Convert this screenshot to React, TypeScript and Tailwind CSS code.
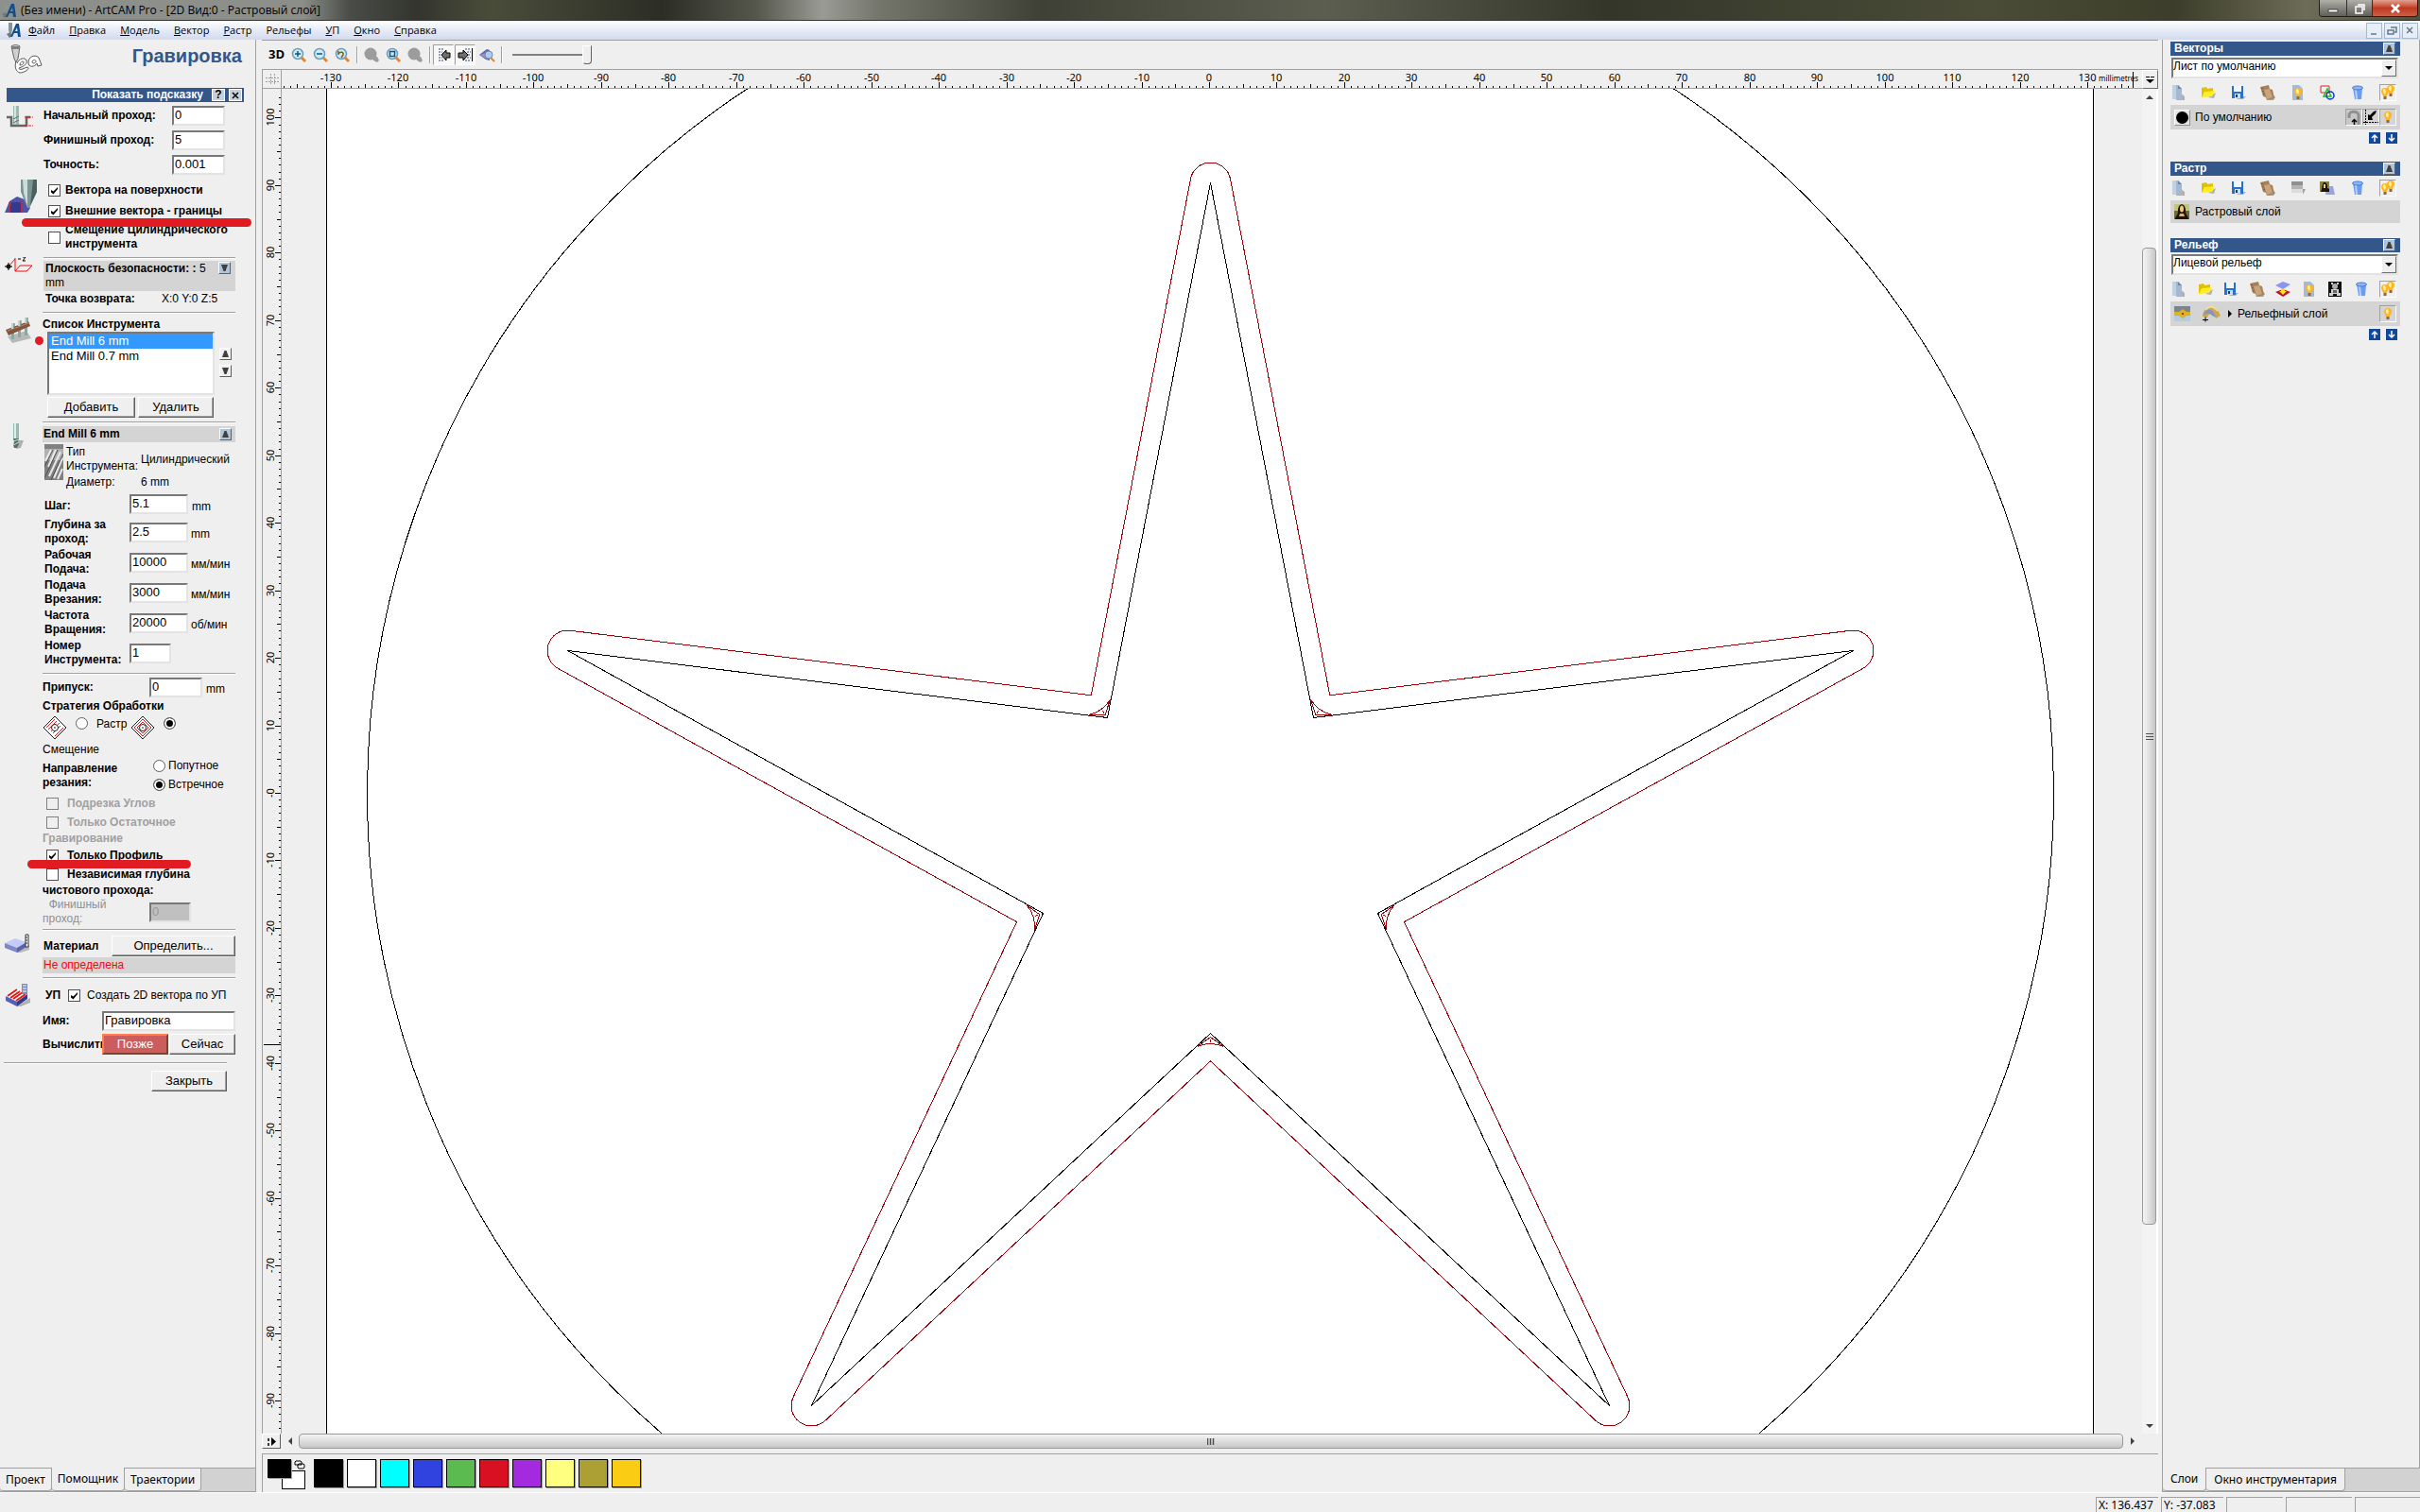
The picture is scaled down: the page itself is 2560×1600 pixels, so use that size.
import { ReactNode, useState } from "react";

const MM = 7.146;
const ORIGIN_X = 981;
const ORIGIN_Y = 745;

type Point = [number, number];

// star outline in canvas pixels, relative to the model origin, clockwise from the top
const STAR: Point[] = [
  [0, -646],
  [109, -80],
  [680, -151],
  [177, 127],
  [422, 648],
  [0, 254],
  [-422, 648],
  [-177, 127],
  [-680, -151],
  [-109, -80],
];

const PALETTE = [
  { name: "Чёрный", color: "bg-black" },
  { name: "Белый", color: "bg-white" },
  { name: "Голубой", color: "bg-[#00ffff]" },
  { name: "Синий", color: "bg-[#3043df]" },
  { name: "Зелёный", color: "bg-[#5cbb50]" },
  { name: "Красный", color: "bg-[#d81022]" },
  { name: "Фиолетовый", color: "bg-[#a42ae0]" },
  { name: "Жёлтый", color: "bg-[#ffff80]" },
  { name: "Оливковый", color: "bg-[#aca034]" },
  { name: "Оранжевый", color: "bg-[#facc14]" },
];

const MENU = [
  "Файл",
  "Правка",
  "Модель",
  "Вектор",
  "Растр",
  "Рельефы",
  "УП",
  "Окно",
  "Справка",
];

function unit(a: Point, b: Point): Point {
  const dx = b[0] - a[0];
  const dy = b[1] - a[1];
  const len = Math.hypot(dx, dy);
  return [dx / len, dy / len];
}

function at(i: number): Point {
  return STAR[(i + STAR.length) % STAR.length];
}

// tool path around the star: arcs at the tips, sharp corners in the notches
function offsetPath(r: number) {
  let d = "";
  STAR.forEach((p, i) => {
    const u1 = unit(at(i - 1), p);
    const u2 = unit(p, at(i + 1));
    const n1: Point = [u1[1], -u1[0]];
    const n2: Point = [u2[1], -u2[0]];
    const cmd = d ? "L" : "M";
    if (i % 2 === 0) {
      d += `${cmd}${p[0] + n1[0] * r} ${p[1] + n1[1] * r}`;
      d += `A${r} ${r} 0 0 1 ${p[0] + n2[0] * r} ${p[1] + n2[1] * r}`;
    } else {
      const k = r / (1 + n1[0] * n2[0] + n1[1] * n2[1]);
      d += `${cmd}${p[0] + (n1[0] + n2[0]) * k} ${p[1] + (n1[1] + n2[1]) * k}`;
    }
  });
  return d + "Z";
}

// leftover material that the tool cannot reach in a notch
function notchPath(i: number) {
  const p = at(i);
  const a = unit(p, at(i - 1));
  const b = unit(p, at(i + 1));
  const len = Math.hypot(a[0] + b[0], a[1] + b[1]);
  const m: Point = [(a[0] + b[0]) / len, (a[1] + b[1]) / len];
  const go = (u: Point, k: number, s: number) =>
    `${p[0] + u[0] * k + m[0] * s} ${p[1] + u[1] * k + m[1] * s}`;
  return `M${go(a, 19, 1)}Q${go(m, 8, 0)} ${go(b, 19, 1)}L${go(m, 4, 0)}ZM${go(m, 6, 0)}L${go(m, 9, 0)}`;
}

function Canvas() {
  return (
    <svg className="block h-full w-full bg-[#efefef]" shapeRendering="crispEdges">
      <g transform={`translate(${ORIGIN_X + 1.5} ${ORIGIN_Y + 0.5})`} fill="none">
        <rect x="-935" y="-2000" width="1869" height="4000" fill="#fff" stroke="#000" />
        <circle r="892" stroke="#000" />
        <path d={"M" + STAR.map((p) => p.join(" ")).join("L") + "Z"} stroke="#000" />
        <path d={offsetPath(3 * MM)} stroke="#a00008" />
        {[1, 3, 5, 7, 9].map((i) => (
          <path key={i} d={notchPath(i)} stroke="#a00008" />
        ))}
      </g>
    </svg>
  );
}

function tickLength(n: number) {
  if (n % 10 === 0) return 6;
  return n % 5 === 0 ? 4 : 2;
}

function HorizontalRuler() {
  const ticks = Array.from({ length: 274 }, (_, i) => i - 137);
  return (
    <svg className="block h-full w-full" shapeRendering="crispEdges">
      {ticks.map((n) => {
        const x = Math.round(ORIGIN_X + n * MM);
        return (
          <g key={n}>
            <path d={`M${x}.5 19v-${tickLength(n)}`} stroke="#000" />
            {n % 10 === 0 && (
              <text x={x} y="12" textAnchor="middle" className="font-['Noto_Sans',sans-serif] text-[11px]">
                {n}
              </text>
            )}
          </g>
        );
      })}
      <text x="1922" y="12" className="font-['Noto_Sans',sans-serif] text-[8px]">
        millimetres
      </text>
      <path d="M1958.5 2v17" stroke="#000" />
    </svg>
  );
}

function VerticalRuler() {
  const ticks = Array.from({ length: 199 }, (_, i) => i - 95);
  return (
    <svg className="block h-full w-full" shapeRendering="crispEdges">
      {ticks.map((n) => {
        const y = Math.round(ORIGIN_Y - n * MM);
        return (
          <g key={n}>
            <path d={`M19 ${y}.5h-${tickLength(n)}`} stroke="#000" />
            {n % 10 === 0 && (
              <text
                transform={`translate(12 ${y}) rotate(-90)`}
                textAnchor="middle"
                className="font-['Noto_Sans',sans-serif] text-[11px]"
              >
                {n === 0 ? "-0" : n}
              </text>
            )}
          </g>
        );
      })}
      <path d="M1 1011.5h18" stroke="#000" />
    </svg>
  );
}

function Rule({ className }: { className: string }) {
  return <div className={`h-[2px] border-t border-[#a0a0a0] border-b border-b-white ${className}`} />;
}

function Check({ id, checked = false, disabled }: { id: string; checked?: boolean; disabled?: boolean }) {
  const [on, setOn] = useState(checked);
  return (
    <span className="grid h-[13px] w-[13px] shrink-0">
      <input
        id={id}
        type="checkbox"
        checked={on}
        disabled={disabled}
        onChange={(e) => setOn(e.target.checked)}
        className="h-[13px] w-[13px] appearance-none border border-[#505050] bg-white [grid-area:1/1] disabled:border-[#808080] disabled:bg-[#efefef]"
      />
      {on && (
        <svg viewBox="0 0 13 13" className="pointer-events-none h-[13px] w-[13px] [grid-area:1/1]">
          <path d="M3 6v2.500l2.500 2L10 5V3L5.500 7.500z" fill="#000" />
        </svg>
      )}
    </span>
  );
}

function Radio({ id, name, defaultChecked }: { id: string; name: string; defaultChecked?: boolean }) {
  return (
    <input
      id={id}
      type="radio"
      name={name}
      defaultChecked={defaultChecked}
      className="h-[13px] w-[13px] shrink-0 appearance-none rounded-full border border-[#606060] bg-white checked:bg-black checked:shadow-[inset_0_0_0_2px_white]"
    />
  );
}

function Field({ id, value, className, disabled }: { id: string; value: string; className: string; disabled?: boolean }) {
  return (
    <input
      id={id}
      type="text"
      defaultValue={value}
      disabled={disabled}
      className={`h-[21px] shrink-0 border-2 border-t-[#787878] border-r-[#e3e3e3] border-b-[#e3e3e3] border-l-[#787878] bg-white px-px pb-[2px] text-[13px] leading-4 disabled:bg-[#c0c0c0] disabled:text-[#989898] ${className}`}
    />
  );
}

function PushButton({ children, className = "" }: { children: ReactNode; className?: string }) {
  return (
    <button
      type="button"
      className={`h-[22px] shrink-0 border border-t-white border-r-[#606060] border-b-[#606060] border-l-white bg-[#efefef] text-[13px] leading-4 shadow-[inset_-1px_-1px_0_#a0a0a0] ${className}`}
    >
      {children}
    </button>
  );
}

function ArrowButton({ down, label, blue }: { down?: boolean; label: string; blue?: boolean }) {
  return (
    <button
      type="button"
      aria-label={label}
      className={`flex h-[13px] w-[13px] shrink-0 items-center justify-center border border-t-white border-r-[#606060] border-b-[#606060] border-l-white ${blue ? "bg-[#b0c4d8]" : "bg-[#efefef]"}`}
    >
      <svg viewBox="0 0 9 9" className="h-[9px] w-[9px]" fill="#404040">
        {down ? <path d="M1 1h7L5.500 8h-2z" /> : <path d="M1 8h7L5.500 1h-2z" />}
      </svg>
    </button>
  );
}

function ParamRow({ id, label, value, units, narrow }: { id: string; label: string[]; value: string; units: string; narrow?: boolean }) {
  return (
    <div className="flex h-[30px] items-center">
      <label htmlFor={id} className="w-[92px] pl-[2px] font-bold">
        {label[0]}
        <br />
        {label[1]}
      </label>
      <Field id={id} value={value} className={narrow ? "w-[44px]" : "w-[62px]"} />
      <span className="pt-[4px] pl-[3px]">{units}</span>
    </div>
  );
}

function StrategyIcon({ offset }: { offset?: boolean }) {
  return (
    <svg viewBox="0 0 26 26" className="h-[26px] w-[26px] shrink-0" fill="none">
      <path d="M13 1l12 12-12 12L1 13z" fill="#fff" stroke="#222" />
      {offset ? (
        <path d="M13 4l9 9-9 9-9-9zM13 7l6 6-6 6-6-6z" stroke="#e02020" />
      ) : (
        <path d="M4 13l9-9M6 15l9-9M9 17l9-9M11 19l8-8M13 22l9-9" stroke="#e02020" strokeWidth="1" />
      )}
      <circle cx="13" cy="13" r="3.500" fill="#fff" stroke="#222" />
      <path d="M12 13h2" stroke="#222" />
    </svg>
  );
}

function AppIcon() {
  return (
    <svg viewBox="0 0 16 16" className="h-4 w-4 shrink-0">
      <path d="M2 0h4v8l-1 3H3L2 8z" fill="#8a9494" />
      <path d="M0 12l4-2 2 4-3 2z" fill="#707878" />
      <path d="M4 15L10 1h3l2 14h-3l-.5-4H8l-2 4zM9 9h2.500L11 5z" fill="#104f8c" />
    </svg>
  );
}

function EngraveIcon() {
  return (
    <svg viewBox="0 0 34 32" className="h-8 w-[34px]" fill="none">
      <path d="M1 2c3-2 6-2 9 0l-2 13-2 4-2-4z" fill="#d0d0d0" stroke="#666" />
      <path d="M2 2h7v3H2z" fill="#808080" />
      <path
        d="M6 18c-2 6 0 11 4 12 4 0 9-3 9-5 0-1-2-1-6 1-3 1-4 0-4-1 6-2 9-5 8-8-2-4-8-2-10 3"
        fill="#fff"
        stroke="#555"
      />
      <path d="M30 14c-4-4-11-1-11 5 0 6 7 5 9 1l1 3 4-1-3-8z" fill="#fff" stroke="#555" />
      <path d="M23 18c1-2 4-2 4 0s-4 3-4 0zM10 21c1-3 4-4 4-2s-2 3-4 3z" stroke="#555" />
    </svg>
  );
}

function DepthIcon() {
  return (
    <svg viewBox="0 0 30 24" className="h-6 w-[30px]" fill="none">
      <path d="M1 12h5v9h16v-9h4" stroke="#666" strokeWidth="2.500" />
      <path d="M8 0h6v20H8z" fill="#9fb8b2" />
      <path d="M9 0h2v19H9z" fill="#d4e6e0" />
      <path d="M8 14l6-3M8 18l6-3" stroke="#56706c" />
      <path d="M20 12h9M20 21h9" stroke="#e02020" strokeDasharray="3 1" />
    </svg>
  );
}

function SurfaceIcon() {
  return (
    <svg viewBox="0 0 36 36" className="h-9 w-9">
      <path d="M0 35l5-12 8-5 8 3 6 9-3 5z" fill="#4c54a8" />
      <path d="M7 24h10v11H5z" fill="#323a90" />
      <path d="M5 24v11M18 24v11" stroke="#e02020" strokeWidth="1.500" />
      <path d="M17 0h17v13l-8 17h-2L17 13z" fill="#7c9494" />
      <path d="M19 0h5v28l-4-14z" fill="#ccdcd8" />
      <path d="M30 0h4v13l-7 15z" fill="#4c6060" />
    </svg>
  );
}

function SafePlaneIcon() {
  return (
    <svg viewBox="0 0 32 18" className="h-[18px] w-8" fill="none">
      <path d="M11 1v14h12l6-6H16l-5 6M4 10l7-8" stroke="#f01010" />
      <circle cx="4" cy="10" r="2" fill="#555" stroke="#000" />
      <path d="M4 6v8M0 10h8M14 2h3M19 0h3l-3 4h3" stroke="#000" />
    </svg>
  );
}

function ToolRackIcon() {
  return (
    <svg viewBox="0 0 28 28" className="h-7 w-7">
      <path d="M2 20l20-6 5 8-20 5z" fill="#b8b8b8" />
      <path d="M6 10h3v13H6zM13 8h3v13h-3zM20 5h3v14h-3z" fill="#8aa8a2" />
      <path d="M0 13L24 4l2 5L3 19z" fill="#84543c" />
      <path d="M2 14L24 6" stroke="#b88c70" />
      <path d="M6 6h3v6H6zM13 3h3v6h-3zM20 0h3v6h-3z" fill="#c0d4ce" />
      <path d="M9 6v6M16 3v6M23 0v6" stroke="#56706c" />
    </svg>
  );
}

function EndMillIcon() {
  return (
    <svg viewBox="0 0 14 30" className="h-[30px] w-[14px]">
      <path d="M7 20h6l-3 8-5 1z" fill="#b0b0b0" />
      <path d="M2 2h6v17H2z" fill="#94bcb4" />
      <path d="M3 1h2v18H3z" fill="#dceee8" />
      <path d="M2 18h6l-1 3 1 3-2 4H3l-1-3 1-3z" fill="#56706c" />
      <path d="M2 21l6-2M2 25l6-3" stroke="#c8dcd8" />
    </svg>
  );
}

function FluteIcon() {
  return (
    <svg viewBox="0 0 20 38" className="h-[38px] w-5 shrink-0">
      <path d="M0 0h20v38H0z" fill="#808080" />
      <path d="M0 5h20v12H0z" fill="#b0b0b0" />
      <path d="M1 18L7 6M4 24L12 6M5 34L17 8M10 36L19 15M14 37l5-11" stroke="#e8e8e8" strokeWidth="2" />
      <path d="M0 36L14 6M7 38L20 10M0 24L9 6" stroke="#505050" />
    </svg>
  );
}

function MaterialIcon() {
  return (
    <svg viewBox="0 0 28 22" className="h-[22px] w-7">
      <path d="M12 20l14-8v5l-9 3z" fill="#b8b8b8" />
      <path d="M0 10l11-5 12 4-10 6z" fill="#c2ccf6" />
      <path d="M0 10l13 5v5L0 15z" fill="#7c88c8" />
      <path d="M13 15l10-6v5l-10 6z" fill="#5a64a8" />
      <path d="M22 1h3v13h-3z" fill="#fff" stroke="#333" />
      <path d="M22 4h2M22 7h2M22 10h2" stroke="#333" />
    </svg>
  );
}

function ToolpathIcon() {
  return (
    <svg viewBox="0 0 28 26" className="h-[26px] w-7">
      <path d="M12 25l14-9v5l-10 4z" fill="#b0b0b0" />
      <path d="M0 14L11 6l12 6-11 8z" fill="#fff" />
      <path d="M2 14l10-7M5 16l10-7M8 17l10-7M11 19l10-7" stroke="#e01818" strokeWidth="2" />
      <path d="M0 14l12 6v5L0 19z" fill="#5660b8" />
      <path d="M12 20l11-8v5l-11 8z" fill="#343c88" />
      <path d="M17 1h6v11h-6z" fill="#7c8cb4" />
      <path d="M18 3h4M18 6h4M18 9h4" stroke="#fff" />
    </svg>
  );
}

function LeftPanel() {
  return (
    <aside className="flex w-[271px] shrink-0 flex-col border-r border-[#a0a0a0]">
      <div className="min-h-0 flex-1 overflow-hidden pt-px text-[12px] leading-[15px]">
        <div className="flex h-[50px] justify-between pt-[4px] pr-[14px] pl-[11px]">
          <EngraveIcon />
          <h1 className="text-[20px] leading-6 font-bold text-[#33578b]">Гравировка</h1>
        </div>
        <div className="mr-3 ml-[7px] flex h-[15px] items-center justify-end gap-[4px] bg-[#33578b] pr-[2px]">
          <span className="pr-[5px] font-bold text-white">Показать подсказку</span>
          <button type="button" className="h-[13px] w-[14px] border border-white bg-[#c4d2e0] text-[12px] leading-[11px] font-bold">
            ?
          </button>
          <button type="button" aria-label="Закрыть" className="flex h-[13px] w-[14px] items-center justify-center border border-white bg-[#c4d2e0]">
            <svg viewBox="0 0 8 8" className="h-2 w-2">
              <path d="M1 1l6 6M7 1L1 7" stroke="#000" strokeWidth="1.500" />
            </svg>
          </button>
        </div>

        <div className="flex pt-[4px]">
          <div className="w-[46px] shrink-0 pl-[6px]">
            <DepthIcon />
          </div>
          <div className="flex w-[192px] flex-col gap-[5px] font-bold">
            <div className="flex items-center justify-between">
              <label htmlFor="start">Начальный проход:</label>
              <Field id="start" value="0" className="w-[56px] font-normal" />
            </div>
            <div className="flex items-center justify-between">
              <label htmlFor="finish">Финишный проход:</label>
              <Field id="finish" value="5" className="w-[56px] font-normal" />
            </div>
            <div className="flex items-center justify-between">
              <label htmlFor="tolerance">Точность:</label>
              <Field id="tolerance" value="0.001" className="w-[56px] font-normal" />
            </div>
          </div>
        </div>

        <div className="relative flex pt-[5px]">
          <div className="w-[51px] shrink-0 pl-[5px]">
            <SurfaceIcon />
          </div>
          <div className="pt-[4px] font-bold">
            <div className="flex items-center gap-[5px]">
              <Check id="on-surface" checked />
              <label htmlFor="on-surface">Вектора на поверхности</label>
            </div>
            <div className="mt-[7px] flex items-center gap-[5px]">
              <Check id="outer-bounds" checked />
              <label htmlFor="outer-bounds">Внешние вектора - границы</label>
            </div>
            <div className="mt-[5px] flex items-center gap-[5px]">
              <Check id="flat-offset" />
              <label htmlFor="flat-offset">
                Смещение Цилиндрического
                <br />
                инструмента
              </label>
            </div>
          </div>
          <div className="absolute top-[46px] left-[23px] h-[9px] w-[243px] rounded-full bg-[#e01b22]" />
        </div>

        <div className="mt-[6px] flex">
          <div className="w-[46px] shrink-0 pl-[5px]">
            <SafePlaneIcon />
          </div>
          <div className="w-[203px]">
            <Rule className="" />
            <div className="mt-[2px] flex h-8 justify-between bg-[#d4d4d4] px-[2px] pt-px pr-[5px]">
              <span>
                <b>Плоскость безопасности: :</b> 5
                <br />
                mm
              </span>
              <ArrowButton down blue label="Развернуть плоскость безопасности" />
            </div>
            <div className="mt-px flex pl-[2px]">
              <b className="w-[123px]">Точка возврата:</b>
              <span>X:0 Y:0 Z:5</span>
            </div>
          </div>
        </div>

        <div className="mt-[6px] flex">
          <div className="w-[45px] shrink-0 pt-[6px] pl-[6px]">
            <ToolRackIcon />
          </div>
          <div className="w-[204px]">
            <Rule className="" />
            <b className="mt-[4px] block">Список Инструмента</b>
            <div className="relative flex gap-[5px] pl-[5px]">
              <ul
                role="listbox"
                aria-label="Список Инструмента"
                className="h-[67px] w-[177px] border-2 border-t-[#787878] border-r-[#e3e3e3] border-b-[#e3e3e3] border-l-[#787878] bg-white text-[13px] leading-4"
              >
                <li role="option" aria-selected="true" className="bg-[#3399ff] pl-[2px] text-white">
                  End Mill 6 mm
                </li>
                <li role="option" aria-selected="false" className="pl-[2px]">
                  End Mill 0.7 mm
                </li>
              </ul>
              <div className="flex flex-col gap-[5px] pt-[17px]">
                <ArrowButton label="Вверх" />
                <ArrowButton down label="Вниз" />
              </div>
              <span className="absolute top-[5px] -left-2 h-[9px] w-[9px] rounded-full bg-[#e01b22]" />
            </div>
            <div className="mt-[2px] flex gap-[3px] pl-[5px]">
              <PushButton className="w-[93px]">Добавить</PushButton>
              <PushButton className="w-[80px]">Удалить</PushButton>
            </div>
          </div>
        </div>

        <div className="mt-[4px] flex">
          <div className="w-[45px] shrink-0 pl-3">
            <EndMillIcon />
          </div>
          <div className="w-[204px]">
            <Rule className="" />
            <div className="mt-[3px] flex h-[17px] items-center justify-between bg-[#d4d4d4] pr-[4px] pl-px">
              <b>End Mill 6 mm</b>
              <ArrowButton blue label="Свернуть параметры инструмента" />
            </div>
            <div className="mt-[2px] flex h-[49px] pl-[2px]">
              <FluteIcon />
              <div className="grid grid-cols-[79px_auto] content-start items-center gap-y-[2px] pt-px pl-[3px]">
                <span>
                  Тип
                  <br />
                  Инструмента:
                </span>
                <span>Цилиндрический</span>
                <span>Диаметр:</span>
                <span>6 mm</span>
              </div>
            </div>
            <div className="mt-[4px] flex h-[21px] items-center">
              <label htmlFor="step" className="w-[92px] pt-[3px] pl-[2px] font-bold">
                Шаг:
              </label>
              <Field id="step" value="5.1" className="w-[62px]" />
              <span className="pt-[5px] pl-[4px]">mm</span>
            </div>
            <div className="mt-[4px] flex flex-col gap-[2px]">
              <ParamRow id="depth" label={["Глубина за", "проход:"]} value="2.5" units="mm" />
              <ParamRow id="feed" label={["Рабочая", "Подача:"]} value="10000" units="мм/мин" />
              <ParamRow id="plunge" label={["Подача", "Врезания:"]} value="3000" units="мм/мин" />
              <ParamRow id="spindle" label={["Частота", "Вращения:"]} value="20000" units="об/мин" />
              <ParamRow id="number" label={["Номер", "Инструмента:"]} value="1" units="" narrow />
            </div>
            <Rule className="mt-[6px]" />
            <div className="mt-[3px] flex h-[21px] items-center">
              <label htmlFor="allowance" className="w-[113px] font-bold">
                Припуск:
              </label>
              <Field id="allowance" value="0" className="w-[56px]" />
              <span className="pt-[4px] pl-[4px]">mm</span>
            </div>
            <b className="mt-[2px] block">Стратегия Обработки</b>
            <div className="mt-[2px] flex h-[26px] items-start">
              <StrategyIcon />
              <span className="flex pt-[2px] pl-[9px]">
                <Radio id="raster" name="strategy" />
              </span>
              <label htmlFor="raster" className="w-[45px] pt-[2px] pl-[9px]">
                Растр
              </label>
              <StrategyIcon offset />
              <span className="flex pt-[2px] pl-[9px]">
                <Radio id="offset" name="strategy" defaultChecked />
              </span>
            </div>
            <label htmlFor="offset" className="mt-[3px] block">
              Смещение
            </label>
            <div className="mt-[3px] flex h-[33px] items-center">
              <b className="w-[117px]">
                Направление
                <br />
                резания:
              </b>
              <div className="flex flex-col gap-[5px]">
                <div className="flex items-center gap-[3px]">
                  <Radio id="climb" name="direction" />
                  <label htmlFor="climb">Попутное</label>
                </div>
                <div className="flex items-center gap-[3px]">
                  <Radio id="conventional" name="direction" defaultChecked />
                  <label htmlFor="conventional">Встречное</label>
                </div>
              </div>
            </div>
            <div className="mt-[6px] flex items-center gap-[9px] pl-[4px] font-bold text-[#a0a0a0]">
              <Check id="corners" disabled />
              <label htmlFor="corners">Подрезка Углов</label>
            </div>
            <div className="mt-[5px] flex flex-wrap items-center gap-x-[9px] gap-y-[2px] font-bold text-[#a0a0a0]">
              <span className="pl-[4px]">
                <Check id="rest" disabled />
              </span>
              <label htmlFor="rest">Только Остаточное</label>
              <span className="w-full">Гравирование</span>
            </div>
            <div className="relative mt-[3px] flex items-center gap-[9px] pl-[4px] font-bold">
              <Check id="profile" checked />
              <label htmlFor="profile">Только Профиль</label>
              <div className="absolute top-3 -left-4 h-[9px] w-[173px] rounded-full bg-[#e01b22]" />
            </div>
            <div className="mt-[5px] flex flex-wrap items-center gap-x-[9px] gap-y-[2px] font-bold">
              <span className="pl-[4px]">
                <Check id="final" />
              </span>
              <label htmlFor="final">Независимая глубина</label>
              <span className="w-full">чистового прохода:</span>
            </div>
            <div className="flex h-[30px] items-center">
              <label htmlFor="final-pass" className="w-[113px] text-[#909090]">
                &nbsp; Финишный
                <br />
                проход:
              </label>
              <Field id="final-pass" value="0" disabled className="w-[44px]" />
            </div>
          </div>
        </div>

        <div className="mt-[3px] flex">
          <div className="w-[45px] shrink-0 pt-[5px] pl-[5px]">
            <MaterialIcon />
          </div>
          <div className="w-[204px]">
            <Rule className="" />
            <div className="mt-[5px] flex items-center justify-between pl-px">
              <b>Материал</b>
              <PushButton className="w-[131px]">Определить...</PushButton>
            </div>
            <div className="mt-px h-[17px] bg-[#d4d4d4] pl-px leading-[17px] text-[#ff0010]">Не определена</div>
          </div>
        </div>

        <div className="mt-[4px] flex">
          <div className="w-[45px] shrink-0 pt-[6px] pl-[6px]">
            <ToolpathIcon />
          </div>
          <div className="w-[204px]">
            <Rule className="" />
            <div className="mt-[10px] flex items-center pl-[3px]">
              <b className="w-6">УП</b>
              <Check id="make-2d" checked />
              <label htmlFor="make-2d" className="pl-[7px] whitespace-nowrap">
                Создать 2D вектора по УП
              </label>
            </div>
            <div className="mt-[9px] flex items-center justify-between">
              <label htmlFor="path-name" className="font-bold">
                Имя:
              </label>
              <Field id="path-name" value="Гравировка" className="w-[141px]" />
            </div>
            <div className="mt-[3px] flex items-center">
              <b className="w-[63px]">Вычислить</b>
              <button
                type="button"
                className="relative h-[22px] w-[70px] border-2 border-t-[#ff7f50] border-r-[#80402c] border-b-[#80402c] border-l-[#ff7f50] bg-[#cd5c5c] text-[13px] leading-4 text-white"
              >
                Позже
              </button>
              <PushButton className="ml-px w-[70px]">Сейчас</PushButton>
            </div>
          </div>
        </div>

        <div className="mt-[8px] ml-[4px] flex w-[236px] flex-col items-end">
          <Rule className="w-full" />
          <PushButton className="mt-[7px] w-[80px]">Закрыть</PushButton>
        </div>
      </div>
      <Tabs labels={["Проект", "Помощник", "Траектории"]} active={1} tabClass="px-[6px]" />
    </aside>
  );
}

function Tabs({ labels, active, tabClass }: { labels: string[]; active: number; tabClass: string }) {
  return (
    <div role="tablist" className="flex h-[26px] shrink-0 border-b border-[#a0a0a0] bg-[#d2d2d2] font-['Noto_Sans',sans-serif] text-[12px]">
      {labels.map((label, i) => (
        <button
          key={label}
          type="button"
          role="tab"
          aria-selected={i === active}
          className={`rounded-b border-r border-b border-[#a0a0a0] bg-[#efefef] whitespace-nowrap ${tabClass} ${i === active ? "" : "border-t"}`}
        >
          {label}
        </button>
      ))}
      <div className="flex-1 border-t border-[#a0a0a0]" />
    </div>
  );
}

function Magnifier({ children }: { children?: ReactNode }) {
  return (
    <svg viewBox="0 0 17 17" className="h-[17px] w-[17px]" fill="none">
      <path d="M11 11l4 4" stroke="#e8822a" strokeWidth="3" />
      <circle cx="7" cy="7" r="5.500" fill="#c8ecf8" stroke="#6c9cbc" strokeWidth="1.500" />
      {children}
    </svg>
  );
}

function GreyMagnifier() {
  return (
    <svg viewBox="0 0 17 17" className="h-[17px] w-[17px]" fill="#9c9c9c">
      <circle cx="7" cy="7" r="6.500" />
      <path d="M8 8l6 2 2 4-2 2-4-2z" />
    </svg>
  );
}

function Divider() {
  return <span className="h-[18px] w-[2px] border-l border-[#a0a0a0] bg-white" />;
}

function Toolbar() {
  return (
    <div className="flex h-[31px] shrink-0 items-center gap-[6px] border-t border-[#a0a0a0] pl-[7px]">
      <button type="button" className="mr-px font-['Open_Sans',sans-serif] text-[13px] font-bold">
        3D
      </button>
      <button type="button" aria-label="Увеличить">
        <Magnifier>
          <path d="M7 4v6M4 7h6" stroke="#205070" strokeWidth="1.500" />
        </Magnifier>
      </button>
      <button type="button" aria-label="Уменьшить">
        <Magnifier>
          <path d="M4 7h6" stroke="#205070" strokeWidth="1.500" />
        </Magnifier>
      </button>
      <button type="button" aria-label="Предыдущий масштаб">
        <Magnifier>
          <path d="M4 8V4M4 7c2-3 6-2 5 1L7 11" stroke="#806010" strokeWidth="1.500" />
        </Magnifier>
      </button>
      <Divider />
      <button type="button" aria-label="Масштаб выделения" disabled>
        <GreyMagnifier />
      </button>
      <button type="button" aria-label="Показать всё">
        <Magnifier>
          <path d="M4.500 4.500h5v5h-5z" stroke="#205070" strokeWidth="1.500" />
        </Magnifier>
      </button>
      <button type="button" aria-label="Масштаб объекта" disabled>
        <GreyMagnifier />
      </button>
      <Divider />
      <div className="-mr-[2px] -ml-[4px] flex gap-px">
        <button type="button" aria-label="Привязка слева" className="border border-t-[#a0a0a0] border-r-white border-b-white border-l-[#a0a0a0] bg-[#f8f8f8] px-px py-[2px]">
          <svg viewBox="0 0 18 16" className="h-4 w-[18px]">
            <path d="M4 2h6M4 5h4M4 8h3M4 11h4M4 14h6" stroke="#304878" strokeDasharray="2 1" />
            <path d="M7 8l5-5v3h4v5h-4v3z" fill="#707070" stroke="#000" />
          </svg>
        </button>
        <button type="button" aria-label="Привязка справа" className="border border-t-[#a0a0a0] border-r-white border-b-white border-l-[#a0a0a0] bg-[#f8f8f8] px-px py-[2px]">
          <svg viewBox="0 0 18 16" className="h-4 w-[18px]">
            <path d="M9 2h6M11 5h4M12 8h3M11 11h4M9 14h6" stroke="#304878" strokeDasharray="2 1" />
            <path d="M16.500 1v14" stroke="#000" />
            <path d="M12 8L7 3v3H2v5h5v3z" fill="#707070" stroke="#000" />
          </svg>
        </button>
      </div>
      <button type="button" aria-label="Просмотр рельефа">
        <svg viewBox="0 0 17 17" className="h-[17px] w-[17px]">
          <path d="M0 8l8-6 3 1v11l-4-1z" fill="#5c66a0" />
          <path d="M0 8l7-2 2 7z" fill="#8c96c8" />
          <path d="M12 11l4 4" stroke="#e8822a" strokeWidth="2" />
          <circle cx="10" cy="8" r="4" fill="#b0cce8" stroke="#7088b8" />
        </svg>
      </button>
      <Divider />
      <div className="ml-[4px] flex items-center">
        <input
          type="range"
          aria-label="Прозрачность"
          defaultValue={100}
          className="h-5 w-[84px] appearance-none bg-[linear-gradient(#808080,#808080)] bg-[length:74px_2px] bg-left bg-no-repeat [&::-webkit-slider-thumb]:h-5 [&::-webkit-slider-thumb]:w-[10px] [&::-webkit-slider-thumb]:appearance-none [&::-webkit-slider-thumb]:rounded-b-sm [&::-webkit-slider-thumb]:border [&::-webkit-slider-thumb]:border-t-white [&::-webkit-slider-thumb]:border-r-[#606060] [&::-webkit-slider-thumb]:border-b-[#606060] [&::-webkit-slider-thumb]:border-l-white [&::-webkit-slider-thumb]:bg-[#efefef]"
        />
      </div>
    </div>
  );
}

function ScrollArrow({ d, label, className }: { d: string; label: string; className: string }) {
  return (
    <button type="button" aria-label={label} className={`flex shrink-0 items-center justify-center ${className}`}>
      <svg viewBox="0 0 8 8" className="h-2 w-2" fill="#404040">
        <path d={d} />
      </svg>
    </button>
  );
}

function Workspace() {
  return (
    <main className="ml-[6px] flex min-w-0 flex-1 flex-col">
      <Toolbar />
      <div className="flex h-[21px] shrink-0 border-t border-l border-[#a0a0a0]">
        <div className="flex w-5 shrink-0 items-center justify-center border-r border-b border-[#a0a0a0]">
          <svg viewBox="0 0 14 14" className="h-[14px] w-[14px]">
            <path d="M5.500 1v12M9.500 1v12M0 5.500h14M0 9.500h14" stroke="#a0a0a0" strokeDasharray="2 1" />
          </svg>
        </div>
        <div className="min-w-0 flex-1 border-b border-[#a0a0a0]">
          <HorizontalRuler />
        </div>
        <button
          type="button"
          aria-label="Единицы измерения"
          className="flex w-[17px] shrink-0 items-center justify-center border border-t-white border-r-[#707070] border-b-[#707070] border-l-white"
        >
          <svg viewBox="0 0 9 9" className="h-[9px] w-[9px]">
            <path d="M0 1.500h4M5 1.500h4" stroke="#000" />
            <path d="M0 4h9L4.500 8z" />
          </svg>
        </button>
      </div>
      <div className="flex min-h-0 flex-1">
        <div className="w-[21px] shrink-0 border-r border-l border-[#a0a0a0]">
          <VerticalRuler />
        </div>
        <div className="min-w-0 flex-1">
          <Canvas />
        </div>
        <div className="flex w-[15px] shrink-0 flex-col bg-[#f3f3f3]">
          <ScrollArrow d="M0 6h8L4 2z" label="Прокрутить вверх" className="h-[18px]" />
          <div className="flex-[150_1_0]" />
          <div className="flex flex-[1034_1_0] items-center justify-center rounded-sm border border-[#9a9a9a] bg-linear-to-r from-[#f4f4f4] via-[#e0e0e0] to-[#c4c6ca]">
            <svg viewBox="0 0 8 7" className="h-[7px] w-2">
              <path d="M0 .5h8M0 3.500h8M0 6.500h8" stroke="#505050" />
            </svg>
          </div>
          <div className="flex-[204_1_0]" />
          <ScrollArrow d="M0 2h8L4 6z" label="Прокрутить вниз" className="h-[17px]" />
        </div>
        <div className="w-[2px] shrink-0 bg-white" />
      </div>
      <div className="flex h-4 shrink-0">
        <button
          type="button"
          aria-label="Привязка"
          className="flex w-5 shrink-0 items-center justify-center border border-t-white border-r-[#606060] border-b-[#606060] border-l-white"
        >
          <svg viewBox="0 0 9 9" className="h-[9px] w-[9px]">
            <path d="M1 1v3M1 6v3" stroke="#000" strokeWidth="1.500" />
            <path d="M4 0l5 4.500L4 9z" />
          </svg>
        </button>
        <ScrollArrow d="M6 0v8L2 4z" label="Прокрутить влево" className="w-[19px]" />
        <div className="flex flex-1 items-center justify-center rounded-sm border border-[#9a9a9a] bg-linear-to-b from-[#f4f4f4] via-[#dedede] to-[#c4c6ca]">
          <svg viewBox="0 0 8 7" className="h-[7px] w-2">
            <path d="M.5 0v7M3.500 0v7M6.500 0v7" stroke="#505050" strokeWidth="1.500" />
          </svg>
        </div>
        <ScrollArrow d="M2 0v8l4-4z" label="Прокрутить вправо" className="mr-[18px] w-[19px]" />
      </div>
      <div className="mt-[5px] flex h-[41px] shrink-0 gap-[4px] border-t border-l border-[#a0a0a0] pt-[5px] pl-[5px]">
        <div className="relative mr-[5px] h-8 w-[40px]">
          <div className="absolute top-3 left-[15px] h-5 w-[25px] border border-black bg-white" />
          <div className="absolute top-0 left-0 h-5 w-[25px] bg-black shadow-[1px_1px_0_#a0a0a0]" />
          <svg viewBox="0 0 12 10" className="absolute top-px left-[28px] h-[10px] w-3" fill="none">
            <path d="M2 1h5l1 1v3H1V2zM5 4h5l1 1v3l-1 1H5L4 8V5z" stroke="#000" />
          </svg>
        </div>
        {PALETTE.map((c) => (
          <button
            key={c.name}
            type="button"
            aria-label={c.name}
            title={c.name}
            className={`h-[30px] w-[31px] border border-black shadow-[1px_1px_0_#a0a0a0] ${c.color}`}
          />
        ))}
      </div>
    </main>
  );
}

function BulbShape({ x = 0, y = 0 }: { x?: number; y?: number }) {
  return (
    <g transform={`translate(${x} ${y})`}>
      <path d="M4 0C1 0 0 2 0 4s2 3 2 5h4c0-2 2-3 2-5S7 0 4 0z" fill="#ffb520" />
      <path d="M4 1C2 1 1.500 3 2 4.500L4 7l1-3z" fill="#fff2a0" />
      <path d="M2.500 9h3v3h-3z" fill="#8a6a40" />
    </g>
  );
}

function NewIcon() {
  return (
    <svg viewBox="0 0 16 16" className="h-4 w-4">
      <path d="M9 8l5 4v4H5z" fill="#b0b0b0" />
      <path d="M1 0h6l4 4v11H1z" fill="#a4b8d2" />
      <path d="M1 0h4v15H1z" fill="#c2d0e2" />
      <path d="M7 0v4h4z" fill="#7088a8" />
    </svg>
  );
}

function OpenIcon() {
  return (
    <svg viewBox="0 0 16 16" className="h-4 w-4">
      <path d="M8 13l8-5-2 6z" fill="#b0b0b0" />
      <path d="M1 3l5-1 1 2 6-1v7L1 13z" fill="#e0c000" />
      <path d="M4 7l11-1-3 6-11 1z" fill="#ffee20" />
    </svg>
  );
}

function SaveIcon() {
  return (
    <svg viewBox="0 0 16 16" className="h-4 w-4">
      <path d="M10 12h6l-3 3H6z" fill="#b0b0b0" />
      <path d="M1 1h12v13H1z" fill="#2472cc" />
      <path d="M3 1h8v6H3z" fill="#f2f6fa" />
      <path d="M4 9h6v5H4z" fill="#d0dcec" />
      <path d="M5 10h2v3H5z" fill="#104080" />
    </svg>
  );
}

function CopyIcon() {
  return (
    <svg viewBox="0 0 16 16" className="h-4 w-4">
      <path d="M12 8l4 5-2 3H8z" fill="#a0a0a0" />
      <path d="M0 2l9-2 1 4 3 1 2 9-8 2-1-3-3-1z" fill="#a88058" />
      <path d="M4 5l6-1 3 9-6 2z" fill="#c8a47c" />
      <path d="M1 4l2-1M2 7l2-1M3 10l2-1" stroke="#7c5c3c" />
    </svg>
  );
}

function PageBulbIcon() {
  return (
    <svg viewBox="0 0 16 16" className="h-4 w-4">
      <path d="M2 0h9l2 2v14H2z" fill="#a4bad4" />
      <path d="M9 0h4v4z" fill="#e4ecf4" />
      <BulbShape x={4} y={3} />
    </svg>
  );
}

function ShapesIcon() {
  return (
    <svg viewBox="0 0 16 16" className="h-4 w-4" fill="none">
      <path d="M1 1h9v7H1z" stroke="#e02020" />
      <path d="M8 4l4 8H4z" stroke="#20c020" strokeWidth="1.500" />
      <circle cx="11" cy="11" r="4" stroke="#1030d0" strokeWidth="1.500" />
    </svg>
  );
}

function TrashIcon() {
  return (
    <svg viewBox="0 0 16 16" className="h-4 w-4">
      <path d="M3 3h10l-1 12H5z" fill="#6a9cf0" />
      <path d="M5 4h2l1 11H6z" fill="#b4d0fc" />
      <ellipse cx="8" cy="3" rx="5.500" ry="2" fill="#8cb4f8" stroke="#4c7cd0" />
    </svg>
  );
}

function GradientIcon() {
  return (
    <svg viewBox="0 0 16 16" className="h-4 w-4">
      <path d="M1 1h12v4H1z" fill="#909090" />
      <path d="M1 5h12v4H1z" fill="#b4b4b4" />
      <path d="M1 9h12v4H1z" fill="#dcdcdc" />
      <path d="M13 9h3l-3 6z" fill="#a0a0a0" />
    </svg>
  );
}

function MonaIcon() {
  return (
    <svg viewBox="0 0 16 16" className="h-4 w-4">
      <path d="M0 0h16v7H0z" fill="#c0c480" />
      <path d="M0 7h16v9H0z" fill="#6c6c34" />
      <path d="M1 16c0-4 3-3 3-9 0-9 8-9 8 0 0 5 3 5 3 9z" fill="#1c1408" />
      <ellipse cx="8" cy="5" rx="2" ry="3.500" fill="#f0c880" />
      <path d="M6 10h4l1 3H5z" fill="#e0b070" />
    </svg>
  );
}

function RasterMergeIcon() {
  return (
    <svg viewBox="0 0 16 16" className="h-4 w-4">
      <path d="M7 6h7l2 9H6z" fill="#98a4e0" />
      <path d="M0 1h10v11H0z" fill="#8a8240" />
      <path d="M1 12c2-3 1-10 4-10s3 4 3 6l2 1v3z" fill="#1c1408" />
      <path d="M4 4h2v4H4z" fill="#f0c880" />
    </svg>
  );
}

function MergeReliefIcon() {
  return (
    <svg viewBox="0 0 16 16" className="h-4 w-4">
      <path d="M0 11l8-3 8 3-8 5z" fill="#c01020" />
      <path d="M0 4l8-4 8 3-8 5z" fill="#8c94f0" />
      <path d="M6 8h4v2h2l-4 4-4-4h2z" fill="#ffe020" />
    </svg>
  );
}

function BearIcon() {
  return (
    <svg viewBox="0 0 16 16" className="h-4 w-4">
      <path d="M1 0h14v16H1z" fill="#101010" />
      <circle cx="8" cy="5" r="3" fill="#b0b0b0" />
      <path d="M4 1h2v2H4zM10 1h2v2h-2zM4 8h8v5H4zM2 12h4v3H2zM10 12h4v3h-4z" fill="#d0d0d0" />
      <path d="M6 9h4v3H6z" fill="#686868" />
    </svg>
  );
}

function IconButton({ label, children, pressed }: { label: string; children: ReactNode; pressed?: boolean }) {
  return (
    <button
      type="button"
      aria-label={label}
      className={pressed ? "flex h-[18px] w-[18px] items-center justify-center border border-t-[#a0a0a0] border-r-white border-b-white border-l-[#a0a0a0]" : ""}
    >
      {children}
    </button>
  );
}

function BulbsButton() {
  return (
    <IconButton label="Видимость всех слоёв" pressed>
      <svg viewBox="0 0 16 16" className="h-4 w-4">
        <BulbShape x={7} y={0} />
        <BulbShape x={1} y={3} />
      </svg>
    </IconButton>
  );
}

function BulbButton() {
  return (
    <IconButton label="Видимость слоя" pressed>
      <svg viewBox="0 0 16 16" className="h-4 w-4">
        <BulbShape x={4} y={2} />
      </svg>
    </IconButton>
  );
}

function SectionHeader({ title }: { title: string }) {
  return (
    <div className="flex h-[15px] items-center justify-between bg-[#33578b] pr-[5px] pl-[4px]">
      <h2 className="font-bold text-white">{title}</h2>
      <ArrowButton blue label={`Свернуть: ${title}`} />
    </div>
  );
}

function Dropdown({ label, value }: { label: string; value: string }) {
  return (
    <div className="relative mt-[2px] mr-[2px] ml-px">
      <select
        aria-label={label}
        className="block h-[22px] w-full appearance-none border-2 border-t-[#787878] border-r-[#e3e3e3] border-b-[#e3e3e3] border-l-[#787878] bg-white pb-[3px] text-[12px] leading-[15px]"
      >
        <option>{value}</option>
      </select>
      <span className="pointer-events-none absolute top-[2px] right-[2px] flex h-[18px] w-4 items-center justify-center border border-t-white border-r-[#707070] border-b-[#707070] border-l-white bg-[#efefef]">
        <svg viewBox="0 0 8 4" className="h-1 w-2">
          <path d="M0 0h8L4 4z" />
        </svg>
      </span>
    </div>
  );
}

function MoveButtons() {
  return (
    <div className="mt-[3px] flex justify-end gap-[6px] pr-[3px]">
      {["M6 10V3M3 6l3-3 3 3", "M6 2v7M3 6l3 3 3-3"].map((d, i) => (
        <button key={d} type="button" aria-label={i ? "Ниже" : "Выше"} className="h-3 w-3 bg-[#12489c]">
          <svg viewBox="0 0 12 12" className="h-3 w-3" fill="none">
            <path d={d} stroke="#fff" strokeWidth="1.500" />
          </svg>
        </button>
      ))}
    </div>
  );
}

function RightPanel() {
  return (
    <aside className="ml-1 flex w-[273px] shrink-0 flex-col border-l border-[#a0a0a0]">
      <div className="min-h-0 flex-1 overflow-hidden border-r border-[#a0a0a0] pt-[2px] pr-5 pl-2 text-[12px] leading-[15px]">
        <section>
          <SectionHeader title="Векторы" />
          <Dropdown label="Лист" value="Лист по умолчанию" />
          <div className="mt-[6px] flex h-[18px] items-center justify-between pr-[4px] pl-px">
            <IconButton label="Новый слой"><NewIcon /></IconButton>
            <IconButton label="Открыть"><OpenIcon /></IconButton>
            <IconButton label="Сохранить"><SaveIcon /></IconButton>
            <IconButton label="Копировать"><CopyIcon /></IconButton>
            <IconButton label="Показать"><PageBulbIcon /></IconButton>
            <IconButton label="Объединить"><ShapesIcon /></IconButton>
            <IconButton label="Удалить"><TrashIcon /></IconButton>
            <BulbsButton />
          </div>
          <div className="mt-[4px] flex h-[26px] items-center bg-[#d4d4d4] pr-[4px] pl-[4px]">
            <button type="button" aria-label="Цвет слоя" className="flex h-[17px] w-[17px] items-center justify-center border border-t-white border-r-[#909090] border-b-[#909090] border-l-white bg-[#e4e4e4]">
              <span className="h-[13px] w-[13px] rounded-full bg-black" />
            </button>
            <span className="flex-1 pl-[5px]">По умолчанию</span>
            <IconButton label="Блокировка" pressed>
              <svg viewBox="0 0 16 16" className="h-4 w-4" fill="none">
                <path d="M0 0h16v16H0z" fill="#c8c8c8" />
                <path d="M3 9V6c0-5 10-5 10 0v10" stroke="#909090" strokeWidth="3" />
                <path d="M8.500 16v-5M6 13l2.500-2.500L11 13" stroke="#000" strokeWidth="1.500" />
              </svg>
            </IconButton>
            <IconButton label="Привязка" pressed>
              <svg viewBox="0 0 16 16" className="h-4 w-4" fill="none">
                <path d="M2.500 0v16M0 13.500h16" stroke="#000" strokeDasharray="2 1" />
                <path d="M5 11V5l2 1 4-4 3-1-1 3-4 4 1 3z" fill="#000" />
              </svg>
            </IconButton>
            <BulbButton />
          </div>
          <MoveButtons />
        </section>

        <section className="mt-[19px]">
          <SectionHeader title="Растр" />
          <div className="mt-[4px] flex h-[18px] items-center justify-between pr-[4px] pl-px">
            <IconButton label="Новый слой"><NewIcon /></IconButton>
            <IconButton label="Открыть"><OpenIcon /></IconButton>
            <IconButton label="Сохранить"><SaveIcon /></IconButton>
            <IconButton label="Копировать"><CopyIcon /></IconButton>
            <IconButton label="Градиент"><GradientIcon /></IconButton>
            <IconButton label="Объединить"><RasterMergeIcon /></IconButton>
            <IconButton label="Удалить"><TrashIcon /></IconButton>
            <BulbsButton />
          </div>
          <div className="mt-[4px] flex h-6 items-center gap-[6px] bg-[#d4d4d4] pl-[4px]">
            <MonaIcon />
            <span>Растровый слой</span>
          </div>
        </section>

        <section className="mt-4">
          <SectionHeader title="Рельеф" />
          <Dropdown label="Рельеф" value="Лицевой рельеф" />
          <div className="mt-[6px] flex h-[18px] items-center justify-between pr-[4px] pl-px">
            <IconButton label="Новый слой"><NewIcon /></IconButton>
            <IconButton label="Открыть"><OpenIcon /></IconButton>
            <IconButton label="Сохранить"><SaveIcon /></IconButton>
            <IconButton label="Копировать"><CopyIcon /></IconButton>
            <IconButton label="Объединить"><MergeReliefIcon /></IconButton>
            <IconButton label="Показать"><PageBulbIcon /></IconButton>
            <IconButton label="Просмотр"><BearIcon /></IconButton>
            <IconButton label="Удалить"><TrashIcon /></IconButton>
            <BulbsButton />
          </div>
          <div className="mt-[4px] flex h-[26px] items-center bg-[#d4d4d4] pr-[4px] pl-[4px]">
            <svg viewBox="0 0 17 16" className="h-4 w-[17px]">
              <path d="M0 0h17v7H0z" fill="#7c8490" />
              <path d="M0 7h17v9H0z" fill="#b4cce0" />
              <path d="M0 6h5l4-3 4 3h4v4h-4l-4 3-4-3H0z" fill="#d8b420" />
              <path d="M8 7h2v2H8z" fill="#d02020" />
            </svg>
            <svg viewBox="0 0 20 18" className="ml-3 h-[18px] w-5">
              <path d="M1 12C1 2 12-2 17 5l3 6-5 3c-1-6-6-9-9-1z" fill="#c8a850" />
              <path d="M2 11c2-9 10-9 13 2l-4-2c-3-3-6-3-9 0z" fill="#8890c8" />
              <path d="M4 5C8 0 13 1 17 6" stroke="#f0dc98" strokeWidth="2" fill="none" />
              <path d="M1 15.500h6M4 12.500v5" stroke="#000" />
            </svg>
            <svg viewBox="0 0 4 8" className="ml-2 h-2 w-1">
              <path d="M0 0l4 4-4 4z" />
            </svg>
            <span className="flex-1 pl-[6px]">Рельефный слой</span>
            <BulbButton />
          </div>
          <MoveButtons />
        </section>
      </div>
      <Tabs labels={["Слои", "Окно инструментария"]} active={0} tabClass="px-2" />
    </aside>
  );
}

function TitleBar() {
  return (
    <header className="flex h-[22px] shrink-0 items-start border-b border-[#303030] bg-[linear-gradient(90deg,#8e908c_0,#8c8e8a_320px,#4a4c48_370px,#33352e_440px,#4a4c3a_520px,#2c2e26_700px,#55574c_800px,#9a9b94_870px,#74766c_930px,#3f4136_1100px,#5c5e50_1400px,#34362a_1700px,#4a4c38_2100px,#3c3d2a_2300px,#6c6c58_2440px,#50503c_100%)]">
      <div className="flex h-[21px] flex-1 items-center gap-1 pl-[2px]">
        <AppIcon />
        <span className="font-['Open_Sans',sans-serif] text-[12px] text-black">
          (Без имени) - ArtCAM Pro - [2D Вид:0 - Растровый слой]
        </span>
      </div>
      <div className="mr-[2px] flex h-[18px] overflow-hidden rounded-b border border-t-0 border-[#202020]">
        <button type="button" aria-label="Свернуть" className="flex w-[29px] items-center justify-center border-r border-[#303030] bg-linear-to-b from-[#b0b0a8] to-[#60605a]">
          <svg viewBox="0 0 12 10" className="h-[10px] w-3">
            <path d="M1 6h10v3H1z" fill="#fff" stroke="#404040" />
          </svg>
        </button>
        <button type="button" aria-label="Развернуть" className="flex w-[27px] items-center justify-center border-r border-[#303030] bg-linear-to-b from-[#b0b0a8] to-[#60605a]">
          <svg viewBox="0 0 12 12" className="h-3 w-3" fill="none">
            <path d="M4 2h7v6M2 4h7v7H2z" stroke="#fff" strokeWidth="1.500" />
          </svg>
        </button>
        <button type="button" aria-label="Закрыть" className="flex w-[47px] items-center justify-center bg-linear-to-b from-[#e0a090] via-[#c03820] to-[#c86048]">
          <svg viewBox="0 0 12 10" className="h-[10px] w-3">
            <path d="M2 1l8 8M10 1L2 9" stroke="#fff" strokeWidth="2.500" />
          </svg>
        </button>
      </div>
    </header>
  );
}

function MenuBar() {
  return (
    <nav className="flex h-5 shrink-0 items-center bg-linear-to-b from-white via-[#e6ebf6] to-[#d2daee] pr-[2px] pl-[7px]">
      <AppIcon />
      <div className="flex flex-1 gap-[15px] pl-[7px] font-['Open_Sans',sans-serif] text-[11px]">
        {MENU.map((item) => (
          <button key={item} type="button" className="leading-4">
            <span className={item === "Рельефы" ? "" : "underline"}>{item[0]}</span>
            {item.slice(1)}
          </button>
        ))}
      </div>
      <div className="flex gap-[2px]">
        {["M3 10h6", "M5 3h6v5H9M2 6h6v4H2z", "M3 3l6 6M9 3L3 9"].map((d, i) => (
          <button
            key={d}
            type="button"
            aria-label={["Свернуть окно", "Восстановить окно", "Закрыть окно"][i]}
            className="flex h-[17px] w-[17px] items-center justify-center border border-[#a4b8d0] bg-[#e6eef8]"
          >
            <svg viewBox="0 0 13 13" className="h-[13px] w-[13px]" fill="none">
              <path d={d} stroke="#687888" strokeWidth="1.500" />
            </svg>
          </button>
        ))}
      </div>
    </nav>
  );
}

function StatusBar() {
  const cell = "h-4 border-t border-l border-[#a0a0a0] pl-[2px] leading-4 whitespace-nowrap";
  return (
    <footer className="flex h-[21px] shrink-0 items-end justify-end gap-[3px] border-t border-white font-['Noto_Sans',sans-serif] text-[12px]">
      <span className={`w-[66px] ${cell}`}>X: 136.437</span>
      <span className={`w-[66px] ${cell}`}>Y: -37.083</span>
      <span className={`w-[60px] ${cell}`} />
      <span className={`w-[70px] ${cell}`} />
      <span className={`w-[69px] ${cell}`} />
    </footer>
  );
}

export default function App() {
  return (
    <div className="flex h-screen flex-col overflow-hidden bg-[#efefef] font-['Liberation_Sans',Arial,sans-serif] text-black">
      <TitleBar />
      <MenuBar />
      <div className="flex min-h-0 flex-1">
        <LeftPanel />
        <Workspace />
        <RightPanel />
      </div>
      <StatusBar />
    </div>
  );
}
